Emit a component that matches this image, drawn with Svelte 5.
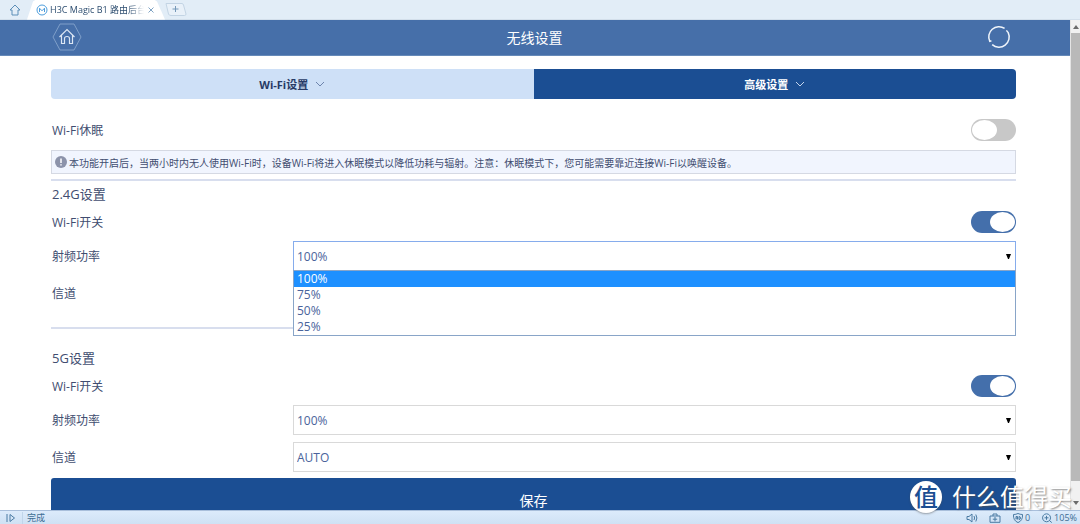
<script lang="ts">
    interface Band {
        id: string;
        title: string;
        enabled: boolean;
        power: string;
        channel: string;
        open: boolean;
    }

    const powerLevels = ["100%", "75%", "50%", "25%"];

    let sleep = $state(false);
    let bands: Band[] = $state([
        { id: "g24", title: "2.4G设置", enabled: true, power: "100%", channel: "AUTO", open: true },
        { id: "g5", title: "5G设置", enabled: true, power: "100%", channel: "AUTO", open: false },
    ]);

    function pick(band: Band, level: string) {
        band.power = level;
        band.open = false;
    }
</script>

{#snippet chevron()}
    <svg class="chevron" viewBox="0 0 10 6" aria-hidden="true">
        <path d="M1 1 L5 5 L9 1" />
    </svg>
{/snippet}

{#snippet arrow()}
    <svg class="select__arrow" viewBox="0 0 5 5" aria-hidden="true">
        <path d="M0 0 H5 L3 5 H2 Z" />
    </svg>
{/snippet}

<div class="browser">
    <div class="tabs-bar">
        <button class="tabs-bar__home" aria-label="主页">
            <svg viewBox="0 0 12 12"><path d="M1 6 L6 1 L11 6 H9 V11 H3 V6 Z" /></svg>
        </button>
        <div class="tab">
            <svg class="tab__logo" viewBox="0 0 12 12" aria-hidden="true">
                <circle cx="6" cy="6" r="5" />
                <path d="M3.5 8 V4.2 L6 6.8 L8.5 4.2 V8" />
            </svg>
            <span class="tab__title">H3C Magic B1 路由后台</span>
            <button class="tab__close" aria-label="关闭">
                <svg viewBox="0 0 6 6"><path d="M0.5 0.5 L5.5 5.5 M5.5 0.5 L0.5 5.5" /></svg>
            </button>
        </div>
        <button class="tabs-bar__add" aria-label="新标签">
            <svg viewBox="0 0 22 13">
                <path class="add__shape" d="M1 0.5 H17 Q18 0.5 18.5 2 L21 11 Q21 12.5 19.5 12.5 H6 Q4 12.5 3.5 11 Z" />
                <path class="add__plus" d="M10.5 3 V9 M7.5 6 H13.5" />
            </svg>
        </button>
    </div>

    <div class="viewport">
        <div class="page">
            <header class="header">
                <a class="header__home" href="#home" aria-label="首页">
                    <svg viewBox="0 0 30 28">
                        <path class="hex" d="M8 1 H22 L29 14 L22 27 H8 L1 14 Z" />
                        <path class="house" d="M7.5 14 L15 6.5 L22.5 14 M9.5 12.5 V20.5 H12.5 V15.5 Q12.5 13.5 15 13.5 Q17.5 13.5 17.5 15.5 V20.5 H20.5 V12.5" />
                    </svg>
                </a>
                <h1>无线设置</h1>
                <button class="header__refresh" aria-label="刷新">
                    <svg viewBox="0 0 24 24">
                        <path d="M17.6 3.4 A10.2 10.2 0 0 0 2.8 16.4 L4.4 15.8 M5.2 19.6 A10.2 10.2 0 0 0 21.2 7.6 L19.4 5.4" />
                    </svg>
                </button>
            </header>

            <main class="content">
                <nav class="nav">
                    <button class="nav__item">Wi-Fi设置{@render chevron()}</button>
                    <button class="nav__item nav__item--active">高级设置{@render chevron()}</button>
                </nav>

                <div class="sleep">
                    <div class="row">
                        <label for="sleep">Wi-Fi休眠</label>
                        <input class="toggle" id="sleep" type="checkbox" bind:checked={sleep} />
                    </div>
                    <p class="note">
                        <svg viewBox="0 0 12 12" aria-hidden="true">
                            <circle cx="6" cy="6" r="6" />
                            <path d="M6 2.5 V7 M6 8.2 V9.6" />
                        </svg>
                        <span>本功能开启后，当两小时内无人使用Wi-Fi时，设备Wi-Fi将进入休眠模式以降低功耗与辐射。注意：休眠模式下，您可能需要靠近连接Wi-Fi以唤醒设备。</span>
                    </p>
                </div>

                {#each bands as band (band.id)}
                    <section class="band">
                        <h2>{band.title}</h2>
                        <div class="row">
                            <label for="{band.id}-switch">Wi-Fi开关</label>
                            <input class="toggle" id="{band.id}-switch" type="checkbox" bind:checked={band.enabled} />
                        </div>
                        <div class="fields">
                            <label for="{band.id}-power">射频功率</label>
                            <div class="select" class:select--open={band.open}>
                                <select id="{band.id}-power" bind:value={band.power}>
                                    {#each powerLevels as level}
                                        <option>{level}</option>
                                    {/each}
                                </select>
                                {@render arrow()}
                                {#if band.open}
                                    <div class="menu" role="listbox" aria-label="射频功率">
                                        {#each powerLevels as level}
                                            <button
                                                class="menu__option"
                                                role="option"
                                                aria-selected={level === band.power}
                                                onclick={() => pick(band, level)}>{level}</button>
                                        {/each}
                                    </div>
                                {/if}
                            </div>
                            <label for="{band.id}-channel">信道</label>
                            <div class="select">
                                <select id="{band.id}-channel" bind:value={band.channel}>
                                    <option>AUTO</option>
                                </select>
                                {@render arrow()}
                            </div>
                        </div>
                    </section>
                {/each}

                <button class="save">保存</button>
            </main>
        </div>

        <div class="scrollbar" aria-hidden="true">
            <svg viewBox="0 0 6 4"><path d="M3 0 L6 4 H0 Z" /></svg>
            <div class="scrollbar__thumb"></div>
            <svg viewBox="0 0 6 4"><path d="M0 0 H6 L3 4 Z" /></svg>
        </div>
    </div>

    <footer class="status">
        <div class="status__play">
            <svg viewBox="0 0 10 10"><path d="M1 1 V9 M4 1.5 L8.5 5 L4 8.5 Z" /></svg>
        </div>
        <span class="status__text">完成</span>
        <svg viewBox="0 0 12 10">
            <path d="M1 3.5 H3 L6 1 V9 L3 6.5 H1 Z M8 3 Q9.2 5 8 7 M9.8 1.5 Q12 5 9.8 8.5" />
        </svg>
        <svg viewBox="0 0 12 10">
            <path d="M1 3 H11 V9.3 H1 Z M4 3 V1 H8 V3 M6 4 V8.4 M3.8 6.2 H8.2" />
        </svg>
        <span class="status__item">
            <svg viewBox="0 0 12 10">
                <path d="M6 0.5 Q8 1.5 10.5 1.5 Q11 7.5 6 9.6 Q1 7.5 1.5 1.5 Q4 1.5 6 0.5 Z M4 6.5 V3.5 H5.5 V6.5 M4 5 H5.5 M7 3.5 V6.5 Q8.5 6.5 8.5 5 Q8.5 3.5 7 3.5" />
            </svg>
            0
        </span>
        <span class="status__item">
            <svg viewBox="0 0 12 10">
                <path d="M5.5 0.8 A4 4 0 1 0 5.6 0.8 M3.5 4.8 H7.5 M5.5 2.8 V6.8 M8.5 7.6 L10.8 9.6" />
            </svg>
            105%
        </span>
    </footer>

    <div class="watermark">
        <span class="watermark__badge">值</span>
        <span>什么值得买</span>
    </div>
</div>

<style>
    :global(body) {
        margin: 0;
    }

    .browser {
        position: relative;
        display: flex;
        flex-direction: column;
        height: 100vh;
        overflow: hidden;
        background: #ffffff;
        color: #414d70;
        font-family: "Open Sans", "Noto Sans CJK SC", sans-serif;
        font-size: 12px;
    }
    .browser *,
    .browser *::before {
        box-sizing: border-box;
    }

    button {
        appearance: none;
        border: none;
        padding: 0;
        background: none;
        color: inherit;
        font: inherit;
        cursor: pointer;
    }
    svg {
        display: block;
        flex: none;
        fill: none;
    }

    .tabs-bar {
        flex: none;
        display: flex;
        align-items: center;
        height: 20px;
        padding-left: 9px;
        background: #e2edf7;
        border-bottom: 1px solid #d3dfeb;
        font-size: 9px;
    }
    .tabs-bar__home svg {
        width: 12px;
        height: 12px;
        stroke: #5d8fb8;
    }
    .tab {
        display: flex;
        align-items: center;
        width: 138px;
        height: 20px;
        margin-left: 6px;
        padding: 0 11px 0 9px;
        background: #ffffff;
        clip-path: polygon(0 100%, 6px 2px, 9px 0, 127px 0, 130px 2px, 100% 100%);
        color: #2e4e70;
    }
    .tab__logo {
        width: 12px;
        height: 12px;
        margin-right: 2px;
        stroke: #4d9ddb;
    }
    .tab__title {
        flex: 1;
        overflow: hidden;
        white-space: nowrap;
        mask-image: linear-gradient(to right, #000 82%, transparent);
    }
    .tab__close {
        margin-left: 4px;
    }
    .tab__close svg {
        width: 6px;
        height: 6px;
        stroke: #7fa3c4;
    }
    .tabs-bar__add svg {
        width: 22px;
        height: 13px;
    }
    .add__shape {
        fill: #e9f1f9;
        stroke: #c3d4e4;
    }
    .add__plus {
        stroke: #7598b8;
    }

    .viewport {
        flex: 1;
        display: flex;
        min-height: 0;
    }
    .page {
        flex: 1;
        overflow: hidden;
    }

    .header {
        display: flex;
        align-items: center;
        justify-content: space-between;
        height: 36px;
        padding: 0 59px 2px 52px;
        background: #466fa9;
        border-bottom: 1px solid #668ab9;
        color: #ffffff;
    }
    .header h1 {
        margin: 0;
        font-size: 14px;
        font-weight: 400;
    }
    .header__home svg {
        width: 30px;
        height: 28px;
    }
    .hex {
        stroke: #7f9fc9;
    }
    .house {
        stroke: #dbe6f4;
        stroke-width: 1.2;
    }
    .header__refresh svg {
        width: 24px;
        height: 24px;
        stroke: #f0f5fb;
        stroke-width: 1.5;
    }

    .content {
        padding: 13px 54px 0 51px;
    }

    .nav {
        display: flex;
        height: 30px;
        border-radius: 4px;
        overflow: hidden;
    }
    .nav__item {
        flex: 1;
        display: flex;
        align-items: center;
        justify-content: center;
        gap: 7px;
        background: #cee0f7;
        color: #273a66;
        font-size: 11px;
        font-weight: 700;
    }
    .nav__item--active {
        background: #1b4e93;
        color: #ffffff;
    }
    .chevron {
        width: 10px;
        height: 6px;
        stroke: #6d84ad;
    }
    .nav__item--active .chevron {
        stroke: #c5d5ec;
    }

    .sleep {
        margin-top: 17px;
        padding-bottom: 5px;
    }
    .row {
        display: flex;
        align-items: center;
        justify-content: space-between;
        height: 28px;
        padding: 0 0 0 1px;
    }
    .note {
        display: flex;
        align-items: center;
        gap: 2px;
        height: 24px;
        margin: 6px 0 0;
        padding: 0 3px;
        background: #f1f5fe;
        border: 1px solid #d5d9e3;
        font-size: 10px;
        white-space: nowrap;
    }
    .note svg {
        width: 12px;
        height: 12px;
        fill: #8c93aa;
        stroke: none;
    }
    .note svg path {
        stroke: #ffffff;
        stroke-width: 1.5;
    }

    .toggle {
        appearance: none;
        width: 45px;
        height: 22px;
        margin: 0;
        padding: 1px;
        border-radius: 11px;
        background: #c8c8c8;
        cursor: pointer;
    }
    .toggle::before {
        content: "";
        display: block;
        width: 25px;
        height: 20px;
        border-radius: 50%;
        background: #ffffff;
    }
    .toggle:checked {
        background: #446fab;
    }
    .toggle:checked::before {
        margin-left: auto;
    }

    .band {
        border-top: 2px solid #d8deee;
    }
    .band + .band {
        margin-top: 19px;
        padding-top: 16px;
    }
    .band h2 {
        height: 27px;
        margin: 0;
        padding-left: 1px;
        font-size: 13px;
        font-weight: 400;
        line-height: 27px;
    }
    .fields {
        display: grid;
        grid-template-columns: 1fr 3fr;
        align-items: center;
        row-gap: 7px;
        margin-top: 5px;
        padding-left: 1px;
    }

    .select {
        position: relative;
        display: grid;
        align-items: center;
        height: 30px;
        border: 1px solid #d9d9d9;
        background: #ffffff;
    }
    .select > select,
    .select__arrow {
        grid-area: 1 / 1;
    }
    .select > select {
        appearance: none;
        width: 100%;
        height: 28px;
        padding: 0 3px;
        border: none;
        outline: none;
        background: none;
        color: #4a639b;
        font: inherit;
    }
    .select__arrow {
        justify-self: end;
        width: 5px;
        height: 5px;
        margin-right: 4px;
        fill: #000000;
        pointer-events: none;
    }
    .select--open {
        border-color: #86acec;
    }
    .menu {
        position: absolute;
        z-index: 10;
        top: 100%;
        left: -1px;
        right: -1px;
        display: flex;
        flex-direction: column;
        background: #ffffff;
        border: 1px solid #89a5c8;
    }
    .menu__option {
        height: 16px;
        padding: 0 3px;
        color: #4a639b;
        line-height: 16px;
        text-align: left;
    }
    .menu__option[aria-selected="true"] {
        background: #1e90ff;
        color: #ffffff;
    }

    .save {
        display: block;
        width: 100%;
        height: 44px;
        margin-top: 6px;
        border-radius: 3px;
        background: #1b4e93;
        color: #ffffff;
        font-size: 14px;
    }

    .scrollbar {
        flex: none;
        display: flex;
        flex-direction: column;
        align-items: center;
        gap: 4px;
        width: 10px;
        padding: 5px 0;
        background: #f1f1f1;
        border-left: 1px solid #e4e4e4;
    }
    .scrollbar svg {
        width: 6px;
        height: 4px;
        fill: #6b6b6b;
    }
    .scrollbar__thumb {
        width: 100%;
        height: 448px;
        margin-bottom: auto;
        background: #b9b9b9;
    }

    .status {
        flex: none;
        display: flex;
        align-items: center;
        gap: 11px;
        height: 14px;
        padding-right: 3px;
        background: linear-gradient(#dcebfb, #cfe1f4);
        border-top: 1px solid #a9bfdb;
        color: #3d6d94;
        font-size: 9px;
        line-height: 12px;
    }
    .status svg {
        width: 12px;
        height: 10px;
        stroke: #4a7ba3;
    }
    .status__play {
        padding: 1px 5px;
        border-right: 1px solid #c0d5ea;
    }
    .status__text {
        flex: 1;
        margin-left: -7px;
    }
    .status__item {
        display: flex;
        align-items: center;
        gap: 1px;
    }

    .watermark {
        position: absolute;
        z-index: 20;
        right: 8px;
        bottom: 11px;
        display: flex;
        align-items: center;
        gap: 10px;
        color: #ffffff;
        font-size: 24px;
        line-height: 24px;
        text-shadow: 1px 1px 2px rgba(80, 80, 80, 0.7);
        pointer-events: none;
    }
    .watermark__badge {
        display: grid;
        place-items: center;
        width: 32px;
        height: 32px;
        border-radius: 50%;
        background: #ffffff;
        box-shadow: 0 1px 2px rgba(80, 80, 80, 0.5);
        color: #1b4e93;
        font-weight: 500;
        text-shadow: none;
    }
</style>
